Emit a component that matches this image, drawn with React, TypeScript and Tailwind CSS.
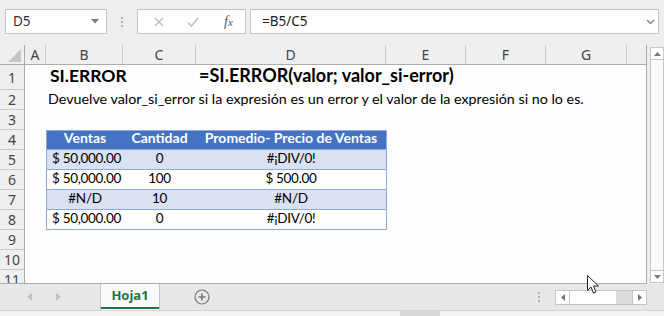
import React from "react";

const ui = { fontFamily: '"Noto Sans", "Open Sans", sans-serif' };
const cell = { fontFamily: 'Lato, "Liberation Sans", sans-serif' };

const columns = [
  { label: "A", w: "w-[21px]" },
  { label: "B", w: "w-[77px]" },
  { label: "C", w: "w-[73px]" },
  { label: "D", w: "w-[190px]" },
  { label: "E", w: "w-[80px]" },
  { label: "F", w: "w-[80px]" },
  { label: "G", w: "w-[81px]" },
];

const tableRows = [
  { venta: "$ 50,000.00", cant: "0", prom: "#¡DIV/0!", band: true },
  { venta: "$ 50,000.00", cant: "100", prom: "$ 500.00", band: false },
  { venta: "#N/D", cant: "10", prom: "#N/D", band: true },
  { venta: "$ 50,000.00", cant: "0", prom: "#¡DIV/0!", band: false },
];

function RowHeader({ n, h }: { n: number; h: string }) {
  return (
    <div
      className={`${h} w-[25px] shrink-0 flex items-center justify-center border-b border-r border-[#c9c9c9] border-r-[#ababab] bg-[#efefef] text-[14px] text-[#444]`}
      style={ui}
    >
      {n}
    </div>
  );
}

function FormulaBar() {
  return (
    <div className="h-[45px] flex items-start pt-[9px] bg-[#eeeeee]">
      <div className="ml-[5px] w-[102px] h-[25px] bg-white border border-[#c6c6c6] flex items-center justify-between pl-[7px] pr-[7px]">
        <span className="text-[13.5px] text-[#333]" style={ui}>
          D5
        </span>
        <svg width="8" height="5" viewBox="0 0 8 5">
          <path d="M0 0h8L4 4.5z" fill="#7a7a7a" />
        </svg>
      </div>
      <div className="w-[30px] h-[25px] flex flex-col items-center justify-center gap-[2px]">
        <span className="w-[2px] h-[2px] bg-[#b0b0b0]" />
        <span className="w-[2px] h-[2px] bg-[#b0b0b0]" />
        <span className="w-[2px] h-[2px] bg-[#b0b0b0]" />
      </div>
      <div className="w-[109px] h-[25px] bg-white border border-[#c6c6c6] flex items-center">
        <svg className="ml-[16px]" width="10" height="10" viewBox="0 0 10 10">
          <path d="M1 1l8 8M9 1l-8 8" stroke="#bdbdbd" strokeWidth="1.4" />
        </svg>
        <svg className="ml-[23px]" width="12" height="10" viewBox="0 0 12 10">
          <path d="M1 5.5l3.5 3.5L11 1" stroke="#bdbdbd" strokeWidth="1.5" fill="none" />
        </svg>
        <span
          className="ml-[25px] text-[14px] italic text-[#555] leading-none"
          style={{ fontFamily: '"Liberation Serif", serif' }}
        >
          f<span className="text-[11px]">x</span>
        </span>
      </div>
      <div className="ml-[4px] mr-[5px] flex-1 h-[25px] bg-white border border-[#c6c6c6] flex items-center justify-between pl-[11px] pr-[3px]">
        <span className="text-[13.5px] text-[#222]" style={ui}>
          =B5/C5
        </span>
        <svg width="9" height="6" viewBox="0 0 9 6">
          <path d="M1 1l3.5 3.5L8 1" stroke="#8a8a8a" strokeWidth="1.5" fill="none" />
        </svg>
      </div>
    </div>
  );
}

function ColumnHeaders() {
  return (
    <div className="h-[20px] flex border-b border-[#ababab] bg-[#efefef]">
      <div className="w-[25px] shrink-0 border-r border-[#ababab] flex items-end justify-end pr-[3px] pb-[2px]">
        <svg width="13" height="13" viewBox="0 0 13 13">
          <path d="M13 0V13H0z" fill="#c4c4c4" />
        </svg>
      </div>
      {columns.map((c) => (
        <div
          key={c.label}
          className={`${c.w} shrink-0 border-r border-[#c9c9c9] flex items-center justify-center text-[14px] text-[#444]`}
          style={ui}
        >
          {c.label}
        </div>
      ))}
      <div className="flex-1" />
    </div>
  );
}

function Sheet() {
  return (
    <div className="w-[647px] h-[239px] overflow-hidden border-r border-b border-[#ababab] bg-[#fdfdfd]">
      <ColumnHeaders />
      {/* fila 1 */}
      <div className="flex h-[25px]">
        <RowHeader n={1} h="h-[25px]" />
        <div className="w-[21px]" />
        <div className="w-[150px] flex items-end pl-[4px] pb-[1px] text-[17.5px] font-bold text-black whitespace-nowrap" style={cell}>
          SI.ERROR
        </div>
        <div className="flex items-end pl-[3px] pb-[1px] text-[18px] font-bold text-black whitespace-nowrap" style={cell}>
          =SI.ERROR(valor; valor_si-error)
        </div>
      </div>
      {/* fila 2 */}
      <div className="flex h-[20px]">
        <RowHeader n={2} h="h-[20px]" />
        <div className="w-[21px]" />
        <div className="flex items-end pl-[2px] pb-[1px] text-[14.3px] text-black whitespace-nowrap" style={cell}>
          Devuelve valor_si_error si la expresión es un error y el valor de la expresión si no lo es.
        </div>
      </div>
      <div className="flex h-[20px]">
        <RowHeader n={3} h="h-[20px]" />
      </div>
      {/* encabezado de tabla */}
      <div className="flex h-[20px]">
        <RowHeader n={4} h="h-[20px]" />
        <div className="w-[21px]" />
        <div className="w-[341px] flex bg-[#4472c4] border border-[#8ea9db] text-[14px] font-bold text-white whitespace-nowrap" style={cell}>
          <div className="w-[76px] flex items-end justify-center pb-[1px]">Ventas</div>
          <div className="w-[73px] flex items-end justify-center pb-[1px]">Cantidad</div>
          <div className="flex-1 flex items-end justify-center pb-[1px]">Promedio- Precio de Ventas</div>
        </div>
      </div>
      {tableRows.map((r, i) => (
        <div key={i} className="flex h-[20px]">
          <RowHeader n={5 + i} h="h-[20px]" />
          <div className="w-[21px]" />
          <div
            className={`w-[341px] flex border-x border-b border-[#8ea9db] text-[13.5px] tracking-[-0.3px] text-black whitespace-nowrap ${r.band ? "bg-[#d9e1f2]" : "bg-white"}`}
            style={cell}
          >
            <div className={`w-[76px] flex items-end pb-[1px] ${r.venta.startsWith("$") ? "pl-[5px]" : "justify-center"}`}>
              {r.venta}
            </div>
            <div className="w-[73px] flex items-end justify-center pb-[1px]">{r.cant}</div>
            <div className="flex-1 flex items-end justify-center pb-[1px]">{r.prom}</div>
          </div>
        </div>
      ))}
      {[9, 10, 11].map((n) => (
        <div key={n} className="flex h-[20px]">
          <RowHeader n={n} h="h-[20px]" />
        </div>
      ))}
    </div>
  );
}

function VerticalScroll() {
  return (
    <div className="w-[14px] ml-[3px] h-[239px] flex flex-col pt-[2px] pb-[1px]">
      <div className="h-[13px] border border-[#c6c6c6] bg-white flex items-center justify-center">
        <svg width="7" height="4" viewBox="0 0 7 4">
          <path d="M0 4h7L3.5 0z" fill="#777" />
        </svg>
      </div>
      <div className="flex-1 border-x border-[#c6c6c6] bg-[#fafafa]" />
      <div className="h-[13px] border border-[#c6c6c6] bg-white flex items-center justify-center">
        <svg width="7" height="4" viewBox="0 0 7 4">
          <path d="M0 0h7L3.5 4z" fill="#777" />
        </svg>
      </div>
    </div>
  );
}

function TabBar() {
  return (
    <div className="h-[26px] flex bg-[#e8e8e8]">
      <div className="w-[100px] flex items-center">
        <svg className="ml-[27px]" width="5" height="8" viewBox="0 0 5 8">
          <path d="M5 0v8L0 4z" fill="#c3c3c3" />
        </svg>
        <svg className="ml-[24px]" width="5" height="8" viewBox="0 0 5 8">
          <path d="M0 0v8l5-4z" fill="#c3c3c3" />
        </svg>
      </div>
      <div className="w-[60px] flex flex-col bg-[#fafafa] border-x border-[#c6c6c6]">
        <div className="flex-1 flex items-center justify-center text-[13px] font-bold text-[#217346]" style={ui}>
          Hoja1
        </div>
        <div className="h-[2px] bg-[#217346] mb-[1px]" />
      </div>
      <div className="w-[84px] flex items-center justify-center">
        <svg width="16" height="16" viewBox="0 0 16 16">
          <circle cx="8" cy="8" r="7" stroke="#777" strokeWidth="1.2" fill="none" />
          <path d="M8 4.5v7M4.5 8h7" stroke="#777" strokeWidth="1.6" />
        </svg>
      </div>
      <div className="flex-1 flex items-center justify-end pr-[15px]">
        <div className="flex flex-col gap-[2px]">
          <span className="w-[2px] h-[2px] bg-[#b0b0b0]" />
          <span className="w-[2px] h-[2px] bg-[#b0b0b0]" />
          <span className="w-[2px] h-[2px] bg-[#b0b0b0]" />
        </div>
      </div>
      <div className="w-[92px] mr-[17px] flex items-center">
        <div className="w-full h-[15px] flex">
          <div className="w-[15px] border border-[#c6c6c6] bg-white flex items-center justify-center">
            <svg width="4" height="7" viewBox="0 0 4 7">
              <path d="M4 0v7L0 3.5z" fill="#777" />
            </svg>
          </div>
          <div className="w-[46px] border-y border-[#c6c6c6] bg-white" />
          <div className="flex-1 bg-[#dcdcdc] border-y border-[#c6c6c6]" />
          <div className="w-[15px] border border-[#c6c6c6] bg-white flex items-center justify-center">
            <svg width="4" height="7" viewBox="0 0 4 7">
              <path d="M0 0v7l4-3.5z" fill="#777" />
            </svg>
          </div>
        </div>
      </div>
    </div>
  );
}

export default function App() {
  return (
    <div className="relative w-[664px] h-[316px] overflow-hidden bg-[#eeeeee]">
      <FormulaBar />
      <div className="flex">
        <Sheet />
        <VerticalScroll />
      </div>
      <TabBar />
      <div className="h-[6px] flex border-t border-[#d4d4d4] bg-[#f4f4f4]">
        <div className="ml-[400px] w-[40px] bg-[#d9d9d9]" />
      </div>
      {/* puntero del ratón */}
      <svg className="absolute left-[587px] top-[275px]" width="13" height="20" viewBox="0 0 13 20">
        <path d="M0.5 0.5v15l3.5-3.5 2.5 6 2.5-1-2.5-6h5z" fill="white" stroke="#222" strokeWidth="1" />
      </svg>
    </div>
  );
}
